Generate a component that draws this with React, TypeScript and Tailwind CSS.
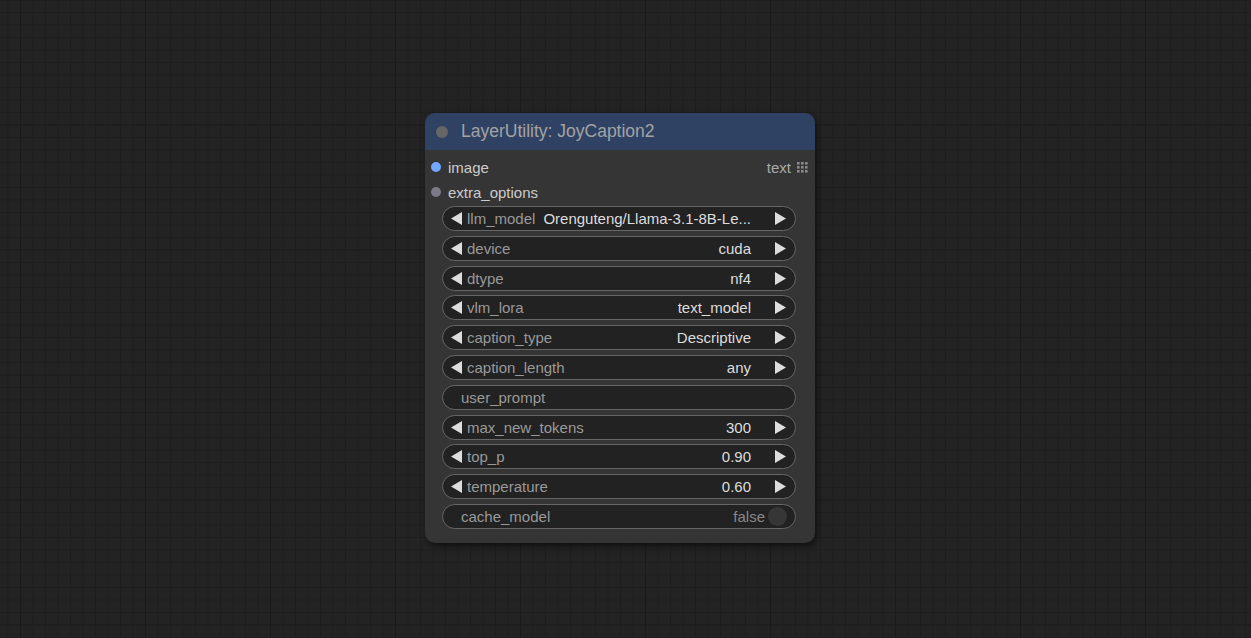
import React from "react";

type W =
  | { kind: "combo"; label: string; value: string }
  | { kind: "text"; label: string }
  | { kind: "toggle"; label: string; value: string };

const widgets: W[] = [
  { kind: "combo", label: "llm_model", value: "Orenguteng/Llama-3.1-8B-Le..." },
  { kind: "combo", label: "device", value: "cuda" },
  { kind: "combo", label: "dtype", value: "nf4" },
  { kind: "combo", label: "vlm_lora", value: "text_model" },
  { kind: "combo", label: "caption_type", value: "Descriptive" },
  { kind: "combo", label: "caption_length", value: "any" },
  { kind: "text", label: "user_prompt" },
  { kind: "combo", label: "max_new_tokens", value: "300" },
  { kind: "combo", label: "top_p", value: "0.90" },
  { kind: "combo", label: "temperature", value: "0.60" },
  { kind: "toggle", label: "cache_model", value: "false" },
];

function LeftArrow() {
  return (
    <svg width="11" height="13" viewBox="0 0 11 13" className="shrink-0">
      <polygon points="11,0 11,13 0,6.5" fill="#dddddd" />
    </svg>
  );
}
function RightArrow() {
  return (
    <svg width="11" height="13" viewBox="0 0 11 13" className="shrink-0">
      <polygon points="0,0 0,13 11,6.5" fill="#dddddd" />
    </svg>
  );
}

function GridIcon() {
  return (
    <svg width="11" height="11" viewBox="0 0 11 11">
      {[0, 4, 8].map((y) =>
        [0, 4, 8].map((x) => (
          <rect key={`${x}-${y}`} x={x} y={y} width="2.6" height="2.6" fill="#8a8a8a" />
        ))
      )}
    </svg>
  );
}

function Widget({ w }: { w: W }) {
  const base =
    "h-[25px] rounded-full border border-[#666666] bg-[#222222] flex items-center text-[15px] leading-none";
  if (w.kind === "combo") {
    return (
      <div className={base}>
        <div className="ml-[8px]">
          <LeftArrow />
        </div>
        <span className="ml-[5px] text-[#999999] whitespace-nowrap">{w.label}</span>
        <span className="ml-auto text-[#dddddd] whitespace-nowrap pl-[7px]">{w.value}</span>
        <div className="ml-[24px] mr-[9px]">
          <RightArrow />
        </div>
      </div>
    );
  }
  if (w.kind === "text") {
    return (
      <div className={base}>
        <span className="ml-[18px] text-[#999999]">{w.label}</span>
      </div>
    );
  }
  return (
    <div className={base}>
      <span className="ml-[18px] text-[#999999]">{w.label}</span>
      <span className="ml-auto text-[#888888]">{w.value}</span>
      <div className="ml-[3px] mr-[8px] w-[19px] h-[19px] rounded-full bg-[#363636]" />
    </div>
  );
}

export default function App() {
  return (
    <div
      className="relative w-[1251px] h-[638px] overflow-hidden bg-[#232323] bg-[image:linear-gradient(to_right,#1b1b1b_1px,transparent_1px),linear-gradient(to_bottom,#1b1b1b_1px,transparent_1px),linear-gradient(to_right,#1e1e1e_1px,transparent_1px),linear-gradient(to_bottom,#1e1e1e_1px,transparent_1px)] bg-[size:125px_125px,125px_125px,12.5px_12.5px,12.5px_12.5px] bg-[position:20px_0px,0px_-0.5px,7.5px_0px,0px_-0.5px]"
      style={{ fontFamily: '"Liberation Sans", Arial, sans-serif' }}
    >
      <div className="absolute left-[425px] top-[113px] w-[390px] rounded-[10px] bg-[#353535] shadow-[2px_3px_6px_rgba(0,0,0,0.55)]">
        {/* title */}
        <div className="h-[37px] rounded-t-[10px] bg-[#2f4264] flex items-center">
          <div className="ml-[11px] w-[12px] h-[12px] rounded-full bg-[#666666]" />
          <span className="ml-[13px] text-[17.5px] leading-none text-[#a3a3a3] whitespace-nowrap">
            LayerUtility: JoyCaption2
          </span>
        </div>
        {/* body */}
        <div className="pt-[4.5px] pb-[14px]">
          <div className="h-[25px] flex items-center text-[15px] leading-none">
            <div className="ml-[6px] w-[10px] h-[10px] rounded-full bg-[#70a8ff]" />
            <span className="ml-[7px] text-[#cccccc]">image</span>
            <span className="ml-auto text-[#aaaaaa]">text</span>
            <div className="ml-[6px] mr-[7px] flex items-center">
              <GridIcon />
            </div>
          </div>
          <div className="h-[25px] flex items-center text-[15px] leading-none">
            <div className="ml-[6px] w-[10px] h-[10px] rounded-full bg-[#7a7a88]" />
            <span className="ml-[7px] text-[#cccccc]">extra_options</span>
          </div>
          <div className="mt-[1.5px] ml-[17px] mr-[19px] flex flex-col gap-[4.8px]">
            {widgets.map((w) => (
              <Widget key={w.label} w={w} />
            ))}
          </div>
        </div>
      </div>
    </div>
  );
}
